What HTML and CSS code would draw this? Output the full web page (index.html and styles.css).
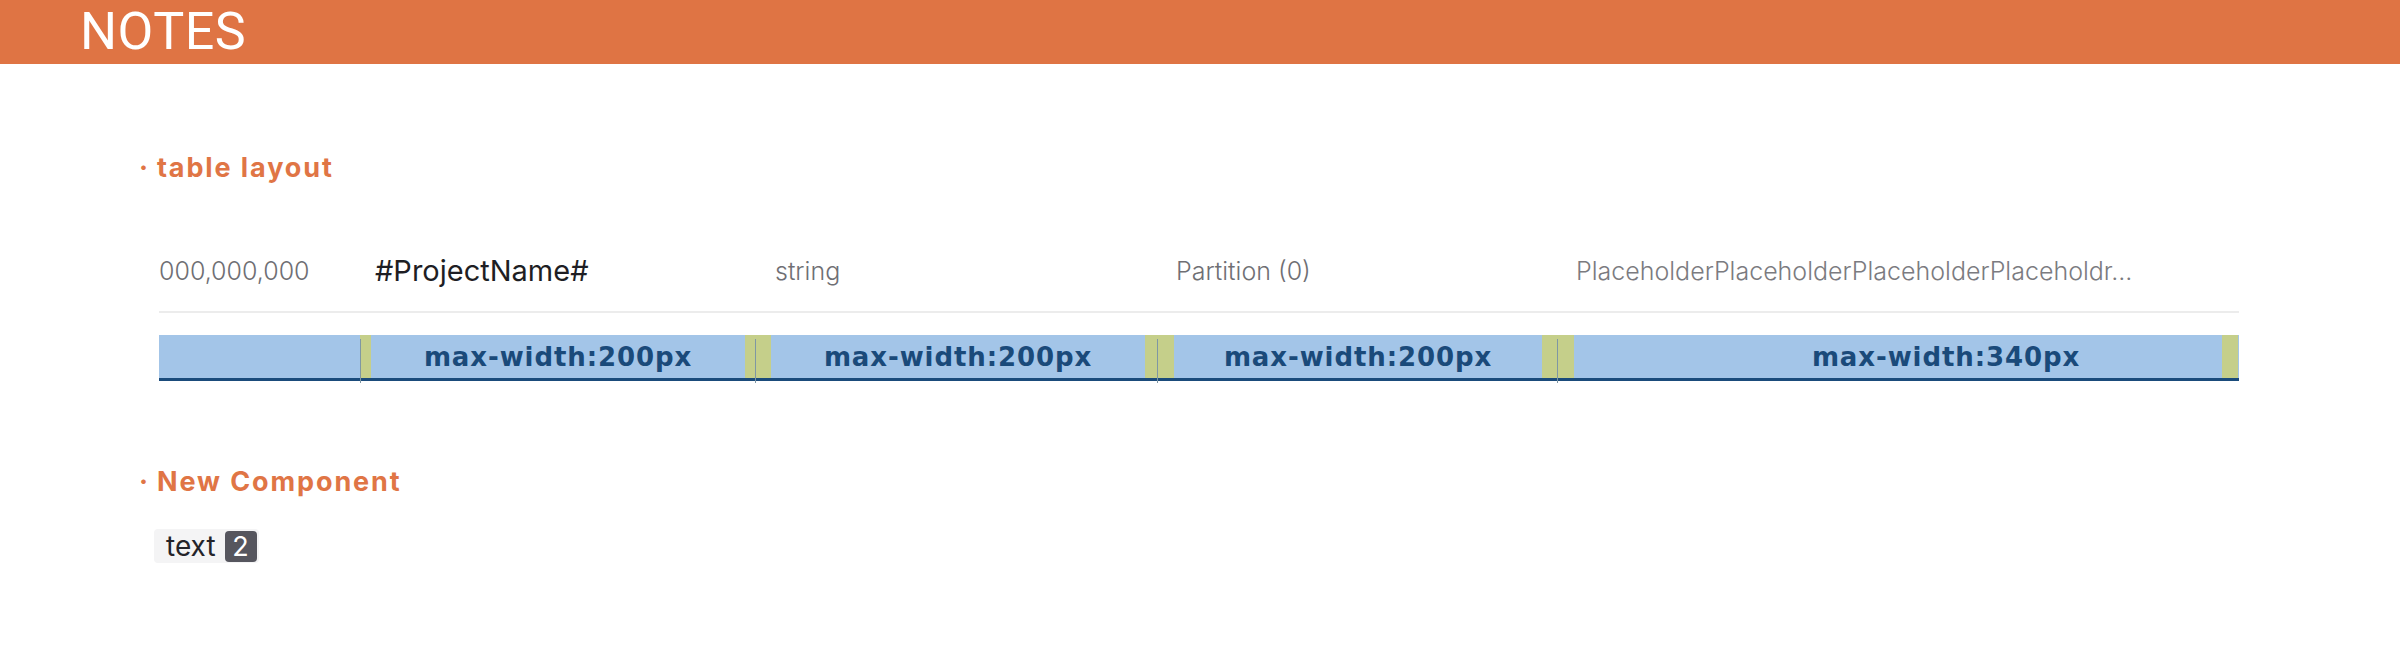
FILE: index.html
```html
<!DOCTYPE html>
<html>
<head>
<meta charset="utf-8">
<link rel="stylesheet" href="styles.css">
</head>
<body>
<header class="topbar"><span class="title">NOTES</span></header>
<main class="content">
  <section class="note">
    <h2 class="note-title"><span class="dot">·</span>table layout</h2>
    <div class="demo">
      <div class="row">
        <div class="cell c1 muted">000,000,000</div>
        <div class="cell c2 strong">#ProjectName#</div>
        <div class="cell c3 muted">string</div>
        <div class="cell c4 muted">Partition (0)</div>
        <div class="cell c5 light">PlaceholderPlaceholderPlaceholderPlaceholdr...</div>
      </div>
      <div class="bar">
        <div class="seg s1"><div class="fill"></div></div>
        <div class="seg s2"><div class="pad pl"></div><div class="fill">max-width:200px</div><div class="pad pr"></div></div>
        <div class="seg s3"><div class="pad pl"></div><div class="fill">max-width:200px</div><div class="pad pr"></div></div>
        <div class="seg s4"><div class="pad pl"></div><div class="fill">max-width:200px</div><div class="pad pr"></div></div>
        <div class="seg s5"><div class="pad pl"></div><div class="fill shifted">max-width:340px</div><div class="pad pr"></div></div>
      </div>
    </div>
  </section>
  <section class="note second">
    <h2 class="note-title"><span class="dot">·</span>New Component</h2>
    <div class="tag"><span class="tag-text">text</span><span class="badge">2</span></div>
  </section>
</main>
</body>
</html>
```

FILE: styles.css
```css
* { box-sizing: border-box; }
html, body { margin: 0; padding: 0; background: #ffffff; }
body { font-family: Inter, "Noto Sans", sans-serif; }

.topbar {
  height: 64px;
  background: #df7444;
  display: flex;
  align-items: center;
  padding-left: 80px;
}
.title {
  font-family: Roboto, "Liberation Sans", sans-serif;
  color: #ffffff;
  font-size: 52px;
  font-weight: 400;
  line-height: 1;
  letter-spacing: 0.5px;
}

.content { padding: 88px 0 0 139px; }

.note-title {
  margin: 0;
  font-family: Inter, sans-serif;
  font-size: 27px;
  font-weight: 700;
  line-height: 32px;
  letter-spacing: 1.9px;
  color: #e07545;
  display: flex;
  align-items: center;
}
.dot { margin-right: 7px; font-weight: 700; }

.demo { margin-left: 20px; margin-top: 47px; width: 2080px; }

.row {
  display: flex;
  padding: 20px 0;
  border-bottom: 2px solid #ececec;
}
.cell {
  font-size: 25px;
  line-height: 40px;
  white-space: nowrap;
  overflow: hidden;
}
.muted { color: #6f6f74; font-weight: 300; }
.light { color: #7b7b80; font-weight: 300; }
.strong { color: #1e1e24; font-size: 29px; font-weight: 400; }

.c1 { width: 201px; }
.c2 { width: 395px; padding-left: 15px; }
.c3 { width: 402px; padding-left: 20px; }
.c4 { width: 400px; padding-left: 19px; }
.c5 { width: 682px; padding-left: 19px; }

.bar {
  margin-top: 22px;
  display: flex;
  height: 46px;
  background: #a3c5e8;
  border-bottom: 3px solid #1a4b7b;
}
.seg { display: flex; height: 43px; position: relative; }
.seg + .seg::before {
  content: "";
  position: absolute;
  left: 0;
  top: 4px;
  bottom: -5px;
  width: 1px;
  background: #7f97a3;
}
.fill {
  flex: 1;
  display: flex;
  align-items: center;
  justify-content: center;
  font-family: "DejaVu Sans", sans-serif;
  font-weight: 700;
  font-size: 26px;
  letter-spacing: 0.9px;
  color: #1a4a7a;
  white-space: nowrap;
}
.fill.shifted { padding-left: 96px; }
.pad { background: #c5cf8a; height: 43px; }

.s1 { width: 201px; }
.s2 { width: 395px; }
.s2 .pl { width: 11px; }
.s2 .pr { width: 10px; }
.s3 { width: 402px; }
.s3 .pl { width: 16px; }
.s3 .pr { width: 12px; }
.s4 { width: 400px; }
.s4 .pl { width: 17px; }
.s4 .pr { width: 15px; }
.s5 { width: 682px; }
.s5 .pl { width: 17px; }
.s5 .pr { width: 16px; margin-right: 1px; }

.second { margin-top: 85px; }

.tag {
  margin-top: 31px;
  margin-left: 15px;
  display: inline-flex;
  align-items: center;
  height: 34px;
  padding: 0 2px 0 12px;
  background: #f4f4f5;
  border-radius: 4px;
}
.tag-text { font-size: 28px; color: #24242a; line-height: 30px; }
.badge {
  margin-left: 9px;
  width: 32px;
  height: 31px;
  border-radius: 4px;
  background: #56565e;
  color: #ffffff;
  font-size: 27px;
  display: flex;
  align-items: center;
  justify-content: center;
}
```
